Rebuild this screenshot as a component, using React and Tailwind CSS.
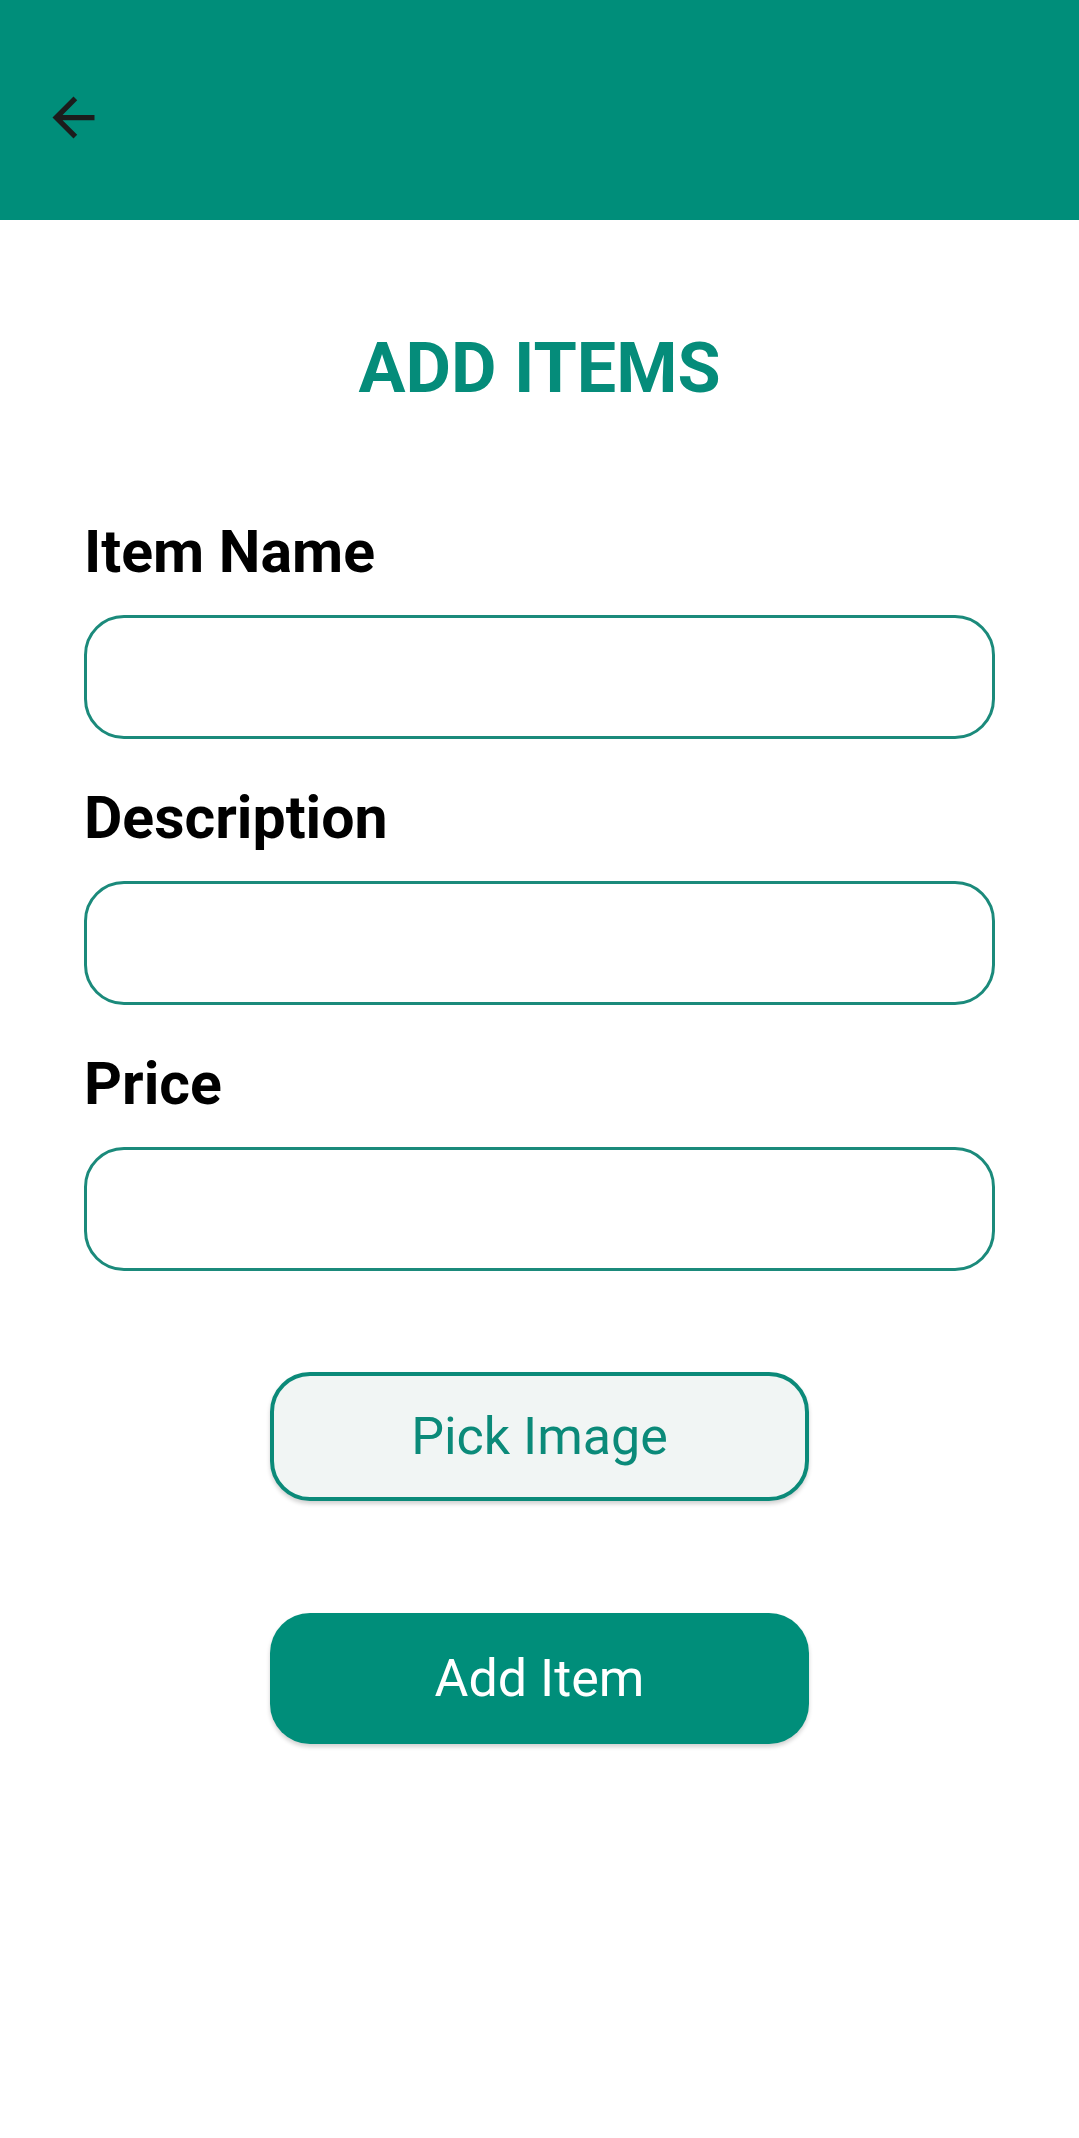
import React, { useState } from 'react';

const BackArrow = () => (
    <svg width="63" height="63" viewBox="0 0 24 24" fill="#1c1c1c">
        <path d="M20 11H7.83l5.59-5.59L12 4l-8 8 8 8 1.41-1.41L7.83 13H20v-2z" />
    </svg>
);

const Field = ({ label, value, onChange, first }) => (
    <div className={first ? 'mt-[119px]' : 'mt-[49px]'}>
        <label className="block text-[59px] leading-none font-bold text-black">{label}</label>
        <input
            value={value}
            onChange={(e) => onChange(e.target.value)}
            className="mt-[34px] block w-full h-[124px] px-[40px] rounded-[40px] border-[3px] border-[#1b8a7b] bg-white text-[48px] outline-none"
        />
    </div>
);

const App = () => {
    const [name, setName] = useState('');
    const [desc, setDesc] = useState('');
    const [price, setPrice] = useState('');

    return (
        <div className="min-h-[2138px] bg-white font-['Roboto',_'Liberation_Sans',_sans-serif]">
            {/* toolbar */}
            <header className="h-[220px] bg-[#008e7a] pl-[42px] pt-[86px]">
                <button className="block"><BackArrow /></button>
            </header>

            <main className="px-[84px]">
                <h1 className="mt-[113px] text-center text-[70px] leading-none font-bold text-[#058c7a]">ADD ITEMS</h1>

                <Field first label="Item Name" value={name} onChange={setName} />
                <Field label="Description" value={desc} onChange={setDesc} />
                <Field label="Price" value={price} onChange={setPrice} />

                <div className="flex flex-col items-center">
                    <button className="mt-[101px] w-[539px] h-[129px] rounded-[40px] border-[4px] border-[#0b8a79] bg-[#f1f5f4] text-[#0b8a79] text-[52px] leading-none flex items-center justify-center shadow-[0_3px_4px_rgba(0,0,0,0.18)]">
                        Pick Image
                    </button>
                    <button className="mt-[112px] w-[539px] h-[131px] rounded-[40px] bg-[#008e7a] text-white text-[52px] leading-none flex items-center justify-center shadow-[0_3px_4px_rgba(0,0,0,0.18)]">
                        Add Item
                    </button>
                </div>
            </main>
        </div>
    );
};

export default App;
